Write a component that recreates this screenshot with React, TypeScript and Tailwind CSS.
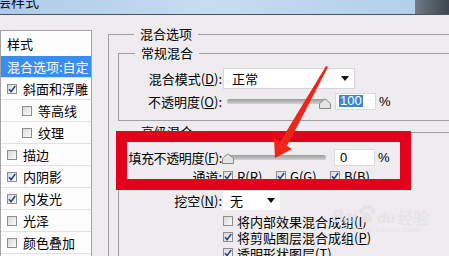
import React from 'react';

const cjk = "font-['Noto_Sans_CJK_SC','Liberation_Sans',sans-serif]";

function Check({ checked }: { checked?: boolean }) {
  return (
    <span className="w-[10px] h-[10px] shrink-0 border border-[#8e8e8e] bg-gradient-to-br from-[#d9d9d9] to-[#fbfbfb] flex items-center justify-center">
      {checked && (
        <svg width="8" height="8" viewBox="0 0 8 8">
          <path d="M1 4.2 L3.1 6.6 L7.2 1" stroke="#2b4a80" strokeWidth="1.6" fill="none" />
        </svg>
      )}
    </span>
  );
}

function Arrow() {
  return (
    <svg width="8" height="5" viewBox="0 0 8 5">
      <path d="M0 0 H8 L4 5 Z" fill="#111" />
    </svg>
  );
}

function Thumb() {
  return (
    <svg width="12" height="11" viewBox="0 0 12 11">
      <path d="M0.5 10.5 V5.5 L6 0.8 L11.5 5.5 V10.5 Z" fill="#e4e4e4" stroke="#8a8a8a" />
    </svg>
  );
}

const layers = [
  { name: '斜面和浮雕', checked: true, indent: false },
  { name: '等高线', checked: false, indent: true },
  { name: '纹理', checked: false, indent: true },
  { name: '描边', checked: false, indent: false },
  { name: '内阴影', checked: true, indent: false },
  { name: '内发光', checked: true, indent: false },
  { name: '光泽', checked: false, indent: false },
  { name: '颜色叠加', checked: false, indent: false },
  { name: '渐变叠加', checked: false, indent: false },
];

export default function App() {
  return (
    <div className={`relative w-[449px] h-[256px] overflow-hidden bg-[#eeecee] text-black text-[13px] leading-none ${cjk}`}>
      {/* title bar */}
      <div className="h-[15px] flex border-b border-[#4d5259] overflow-hidden">
        <div className="flex-1 bg-gradient-to-r from-[#aecbe8] via-[#c6dcf1] to-[#b3cfea]">
          <div className="text-[14px] leading-none -mt-[6px] -ml-[3px] text-[#111]">层样式</div>
        </div>
        <div className="w-[34px] bg-gradient-to-r from-[#6f7c88] to-[#3e464f]" />
      </div>

      <div className="flex">
        {/* left list */}
        <div className="w-[92px] mt-[15px] h-[260px] bg-[#fdfdfd] border border-[#a3a3a3] shrink-0">
          <div className="h-[25px] flex items-center pl-[6px]">样式</div>
          <div className="h-[22px] flex items-center pl-[6px] bg-[#3a8ded] text-white border-b border-[#e2e2e2]">混合选项:自定</div>
          {layers.map((l) => (
            <div
              key={l.name}
              className={`h-[22px] flex items-center gap-[6px] border-b border-[#e2e2e2] ${l.indent ? 'pl-[21px]' : 'pl-[6px]'}`}
            >
              <Check checked={l.checked} />
              <span>{l.name}</span>
            </div>
          ))}
        </div>

        {/* right side */}
        <div className="flex-1 pl-[16px] mt-[12px]">
          <fieldset className="border-l border-t border-[#a0a0a0] pl-[9px] h-[260px]">
            <legend className="ml-[16px] px-[6px] leading-[14px]">混合选项</legend>

            <fieldset className="mt-[5px] border-l border-t border-b border-[#a0a0a0] pb-[10px]">
              <legend className="ml-[16px] px-[6px] leading-[14px]">常规混合</legend>
              <div className="mt-[8px] h-[21px] flex items-center">
                <div className="w-[103px] text-right">
                  混合模式(<span className="underline">D</span>):
                </div>
                <div className="ml-[1px] w-[132px] h-[21px] bg-white border border-[#d6d6d6] flex items-center justify-between pl-[8px] pr-[5px]">
                  <span>正常</span>
                  <Arrow />
                </div>
              </div>
              <div className="mt-[3px] h-[18px] flex items-center">
                <div className="w-[103px] text-right">
                  不透明度(<span className="underline">O</span>):
                </div>
                <div className="relative ml-[5px] w-[100px] h-[5px] rounded-full bg-gradient-to-b from-[#9b9b9b] to-[#d2d2d2]">
                  <div className="absolute left-[92px] -top-[1px]">
                    <Thumb />
                  </div>
                </div>
                <div className="ml-[8px] w-[41px] h-[17px] bg-white border border-[#dadada] flex items-center pl-[3px] font-['Liberation_Sans',sans-serif] text-[13px]">
                  <span className="bg-[#3a86d6] text-white px-[1px] leading-[12px]">100</span>
                </div>
                <span className="ml-[3px] font-['Liberation_Sans',sans-serif]">%</span>
              </div>
            </fieldset>

            <fieldset className="mt-[4px] border-l border-t border-[#a0a0a0] h-[200px]">
              <legend className="ml-[16px] px-[6px] leading-[14px]">高级混合</legend>
              <div className="mt-[9px] h-[18px] flex items-center">
                <div className="w-[103px] text-right tracking-[-0.4px]">
                  填充不透明度(<span className="underline">F</span>):
                </div>
                <div className="relative ml-[4px] w-[100px] h-[5px] rounded-full bg-gradient-to-b from-[#9b9b9b] to-[#d2d2d2]">
                  <div className="absolute -left-[4px] -top-[2px]">
                    <Thumb />
                  </div>
                </div>
                <div className="ml-[8px] w-[41px] h-[17px] bg-white border border-[#dadada] flex items-center pl-[5px] font-['Liberation_Sans',sans-serif]">
                  0
                </div>
                <span className="ml-[3px] font-['Liberation_Sans',sans-serif]">%</span>
              </div>
              <div className="mt-[2px] h-[16px] flex items-center">
                <div className="w-[103px] text-right">通道:</div>
                <div className="ml-[1px] flex items-center gap-[4px] w-[53px]">
                  <Check checked />
                  <span>R(R)</span>
                </div>
                <div className="flex items-center gap-[4px] w-[54px]">
                  <Check checked />
                  <span>G(G)</span>
                </div>
                <div className="flex items-center gap-[4px]">
                  <Check checked />
                  <span>B(B)</span>
                </div>
              </div>
              <div className="mt-[7px] h-[19px] flex items-center">
                <div className="w-[103px] text-right">
                  挖空(<span className="underline">N</span>):
                </div>
                <div className="ml-[1px] w-[57px] h-[19px] bg-white flex items-center justify-between pl-[7px] pr-[5px]">
                  <span>无</span>
                  <Arrow />
                </div>
              </div>
              {[
                { t: '将内部效果混合成组', k: 'I', c: false },
                { t: '将剪贴图层混合成组', k: 'P', c: true },
                { t: '透明形状图层', k: 'T', c: true },
              ].map((r, i) => (
                <div key={r.t} className={`${i === 0 ? 'mt-[3px]' : ''} h-[16px] flex items-center gap-[4px] pl-[104px]`}>
                  <Check checked={r.c} />
                  <span>
                    {r.t}(<span className="underline">{r.k}</span>)
                  </span>
                </div>
              ))}
            </fieldset>
          </fieldset>
        </div>
      </div>

      {/* baidu watermark */}
      <div className="absolute left-[332px] top-[204px] text-[#e5e3e5] pointer-events-none">
        <div className="flex items-end">
          <span className="text-[16px] font-['Liberation_Sans',sans-serif] font-bold italic">Bai</span>
          <svg width="20" height="20" viewBox="0 0 22 22" className="mb-[1px]">
            <ellipse cx="5" cy="8" rx="2.5" ry="3.2" fill="#e4e2e4" />
            <ellipse cx="9" cy="3.5" rx="2.5" ry="3" fill="#e4e2e4" />
            <ellipse cx="14" cy="3.5" rx="2.5" ry="3" fill="#e4e2e4" />
            <ellipse cx="18" cy="8" rx="2.5" ry="3.2" fill="#e4e2e4" />
            <path d="M11 9 C7 9 4 16 6 19 C8 21 14 21 16 19 C18 16 15 9 11 9 Z" fill="#e4e2e4" />
          </svg>
          <span className="text-[15px] font-['Liberation_Sans',sans-serif] font-bold italic">du</span>
          <span className="text-[16px] ml-[2px]">经验</span>
        </div>
        <div className="text-[8px] font-['Liberation_Sans',sans-serif] tracking-[1px] ml-[8px] mt-[1px]">jingyan.baidu.com</div>
      </div>

      {/* red highlight box */}
      <div className="absolute left-[116px] top-[131px] w-[295px] h-[59px] border-[11px] border-[#e2001b] pointer-events-none" />

      {/* red arrow */}
      <svg className="absolute left-0 top-0 pointer-events-none" width="449" height="256" viewBox="0 0 449 256">
        <polygon points="326,66 328,67 287,146 280,142" fill="#f02418" />
        <polygon points="274,138 292,149 275,158" fill="#f02418" />
      </svg>
    </div>
  );
}
